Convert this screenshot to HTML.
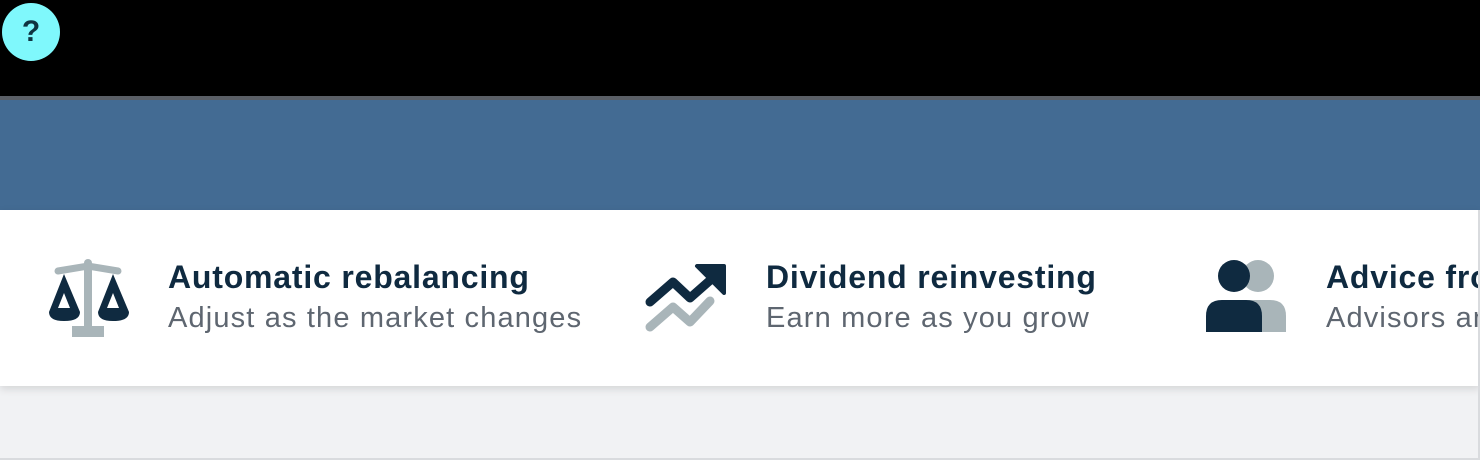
<!DOCTYPE html>
<html><head><style>
body{margin:0;width:1480px;height:460px;overflow:hidden;background:#f1f2f4;font-family:"Liberation Sans",sans-serif;position:relative}
.top{position:absolute;left:0;top:0;width:1480px;height:96px;background:#000}
.line{position:absolute;left:0;top:96px;width:1480px;height:4px;background:#5a5f66}
.blue{position:absolute;left:0;top:100px;width:1480px;height:110px;background:#436b93}
.card{position:absolute;left:0;top:210px;width:1480px;height:176px;background:#fff;box-shadow:0 3px 8px rgba(0,0,0,.12)}
.q{position:absolute;left:2px;top:3px;width:58px;height:58px;border-radius:50%;background:#7ff8fc;color:#0f3340;font-weight:bold;font-size:30px;text-align:center;line-height:58px}
.t{position:absolute;top:49px;white-space:nowrap;font-size:32px;font-weight:bold;color:#0f2a40;letter-spacing:0.8px}
.s{position:absolute;top:92px;white-space:nowrap;font-size:29px;color:#5e6670;letter-spacing:1.15px}
.rb{position:absolute;right:0;top:210px;width:2px;height:250px;background:#d9dbde}
.bb{position:absolute;left:0;bottom:0;width:1480px;height:2px;background:#d9dbde}
</style></head><body>
<div class="top"></div><div class="line"></div><div class="blue"></div>
<div class="q">?</div>
<div class="card">
 <svg style="position:absolute;left:46px;top:48px" width="84" height="80" viewBox="46 258 84 80">
  <path d="M58 271 L88 266 L118 271" stroke="#a9b5b9" stroke-width="7" stroke-linecap="round" fill="none"/>
  <rect x="84" y="259" width="8" height="72" rx="4" fill="#a9b5b9"/>
  <rect x="72" y="326" width="32" height="11" fill="#a9b5b9"/>
  <path d="M64 274 L49 312 Q49 321 64 321 Q80 321 80 312 Z M64 293 L58 308 L70 308 Z" fill="#0f2a40" fill-rule="evenodd"/>
  <path d="M113 274 L98 312 Q98 321 113 321 Q129 321 129 312 Z M113 293 L107 308 L119 308 Z" fill="#0f2a40" fill-rule="evenodd"/>
 </svg>
 <div class="t" style="left:168px">Automatic rebalancing</div>
 <div class="s" style="left:168px">Adjust as the market changes</div>
 <svg style="position:absolute;left:640px;top:50px" width="90" height="80" viewBox="640 260 90 80">
  <path d="M650 302 L673 282 L690 298 L715 276" stroke="#0f2a40" stroke-width="9" stroke-linecap="round" stroke-linejoin="round" fill="none"/>
  <path d="M697 266 L724 266 L724 293 Z" fill="#0f2a40" stroke="#0f2a40" stroke-width="4" stroke-linejoin="round"/>
  <path d="M650 327 L673 307 L690 322 L710 301" stroke="#a9b5b9" stroke-width="9" stroke-linecap="round" stroke-linejoin="round" fill="none"/>
 </svg>
 <div class="t" style="left:766px">Dividend reinvesting</div>
 <div class="s" style="left:766px">Earn more as you grow</div>
 <svg style="position:absolute;left:1204px;top:48px" width="84" height="76" viewBox="1204 258 84 76">
  <circle cx="1258" cy="276" r="16" fill="#a9b5b9"/>
  <path d="M1228 332 V316 Q1228 300 1244 300 H1270 Q1286 300 1286 316 V332 Z" fill="#a9b5b9"/>
  <circle cx="1234" cy="276" r="16" fill="#0f2a40"/>
  <path d="M1206 332 V316 Q1206 300 1222 300 H1246 Q1262 300 1262 316 V332 Z" fill="#0f2a40"/>
 </svg>
 <div class="t" style="left:1326px">Advice from</div>
 <div class="s" style="left:1326px">Advisors and</div>
</div>
<div class="rb"></div><div class="bb"></div>
</body></html>
